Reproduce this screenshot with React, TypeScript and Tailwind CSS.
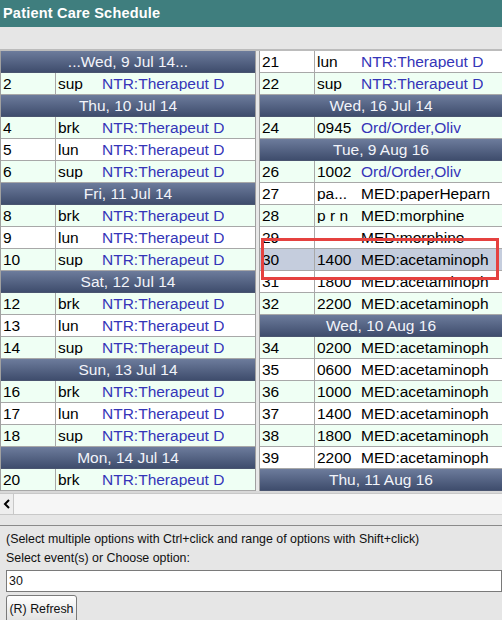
import React from 'react';

type Item =
  | { kind: 'h'; label: string }
  | { kind: 'r'; no: string; code: string; desc: string; med?: boolean; bg: 'm' | 'w' | 's' };

const left: Item[] = [
  { kind: 'h', label: '...Wed, 9 Jul 14...' },
  { kind: 'r', no: '2', code: 'sup', desc: 'NTR:Therapeut D', bg: 'm' },
  { kind: 'h', label: 'Thu, 10 Jul 14' },
  { kind: 'r', no: '4', code: 'brk', desc: 'NTR:Therapeut D', bg: 'm' },
  { kind: 'r', no: '5', code: 'lun', desc: 'NTR:Therapeut D', bg: 'w' },
  { kind: 'r', no: '6', code: 'sup', desc: 'NTR:Therapeut D', bg: 'm' },
  { kind: 'h', label: 'Fri, 11 Jul 14' },
  { kind: 'r', no: '8', code: 'brk', desc: 'NTR:Therapeut D', bg: 'm' },
  { kind: 'r', no: '9', code: 'lun', desc: 'NTR:Therapeut D', bg: 'w' },
  { kind: 'r', no: '10', code: 'sup', desc: 'NTR:Therapeut D', bg: 'm' },
  { kind: 'h', label: 'Sat, 12 Jul 14' },
  { kind: 'r', no: '12', code: 'brk', desc: 'NTR:Therapeut D', bg: 'm' },
  { kind: 'r', no: '13', code: 'lun', desc: 'NTR:Therapeut D', bg: 'w' },
  { kind: 'r', no: '14', code: 'sup', desc: 'NTR:Therapeut D', bg: 'm' },
  { kind: 'h', label: 'Sun, 13 Jul 14' },
  { kind: 'r', no: '16', code: 'brk', desc: 'NTR:Therapeut D', bg: 'm' },
  { kind: 'r', no: '17', code: 'lun', desc: 'NTR:Therapeut D', bg: 'w' },
  { kind: 'r', no: '18', code: 'sup', desc: 'NTR:Therapeut D', bg: 'm' },
  { kind: 'h', label: 'Mon, 14 Jul 14' },
  { kind: 'r', no: '20', code: 'brk', desc: 'NTR:Therapeut D', bg: 'm' },
];

const right: Item[] = [
  { kind: 'r', no: '21', code: 'lun', desc: 'NTR:Therapeut D', bg: 'w' },
  { kind: 'r', no: '22', code: 'sup', desc: 'NTR:Therapeut D', bg: 'm' },
  { kind: 'h', label: 'Wed, 16 Jul 14' },
  { kind: 'r', no: '24', code: '0945', desc: 'Ord/Order,Oliv', bg: 'm' },
  { kind: 'h', label: 'Tue, 9 Aug 16' },
  { kind: 'r', no: '26', code: '1002', desc: 'Ord/Order,Oliv', bg: 'm' },
  { kind: 'r', no: '27', code: 'pa...', desc: 'MED:paperHeparn', med: true, bg: 'w' },
  { kind: 'r', no: '28', code: 'p r n', desc: 'MED:morphine', med: true, bg: 'm' },
  { kind: 'r', no: '29', code: '', desc: 'MED:morphine', med: true, bg: 'w' },
  { kind: 'r', no: '30', code: '1400', desc: 'MED:acetaminoph', med: true, bg: 's' },
  { kind: 'r', no: '31', code: '1800', desc: 'MED:acetaminoph', med: true, bg: 'w' },
  { kind: 'r', no: '32', code: '2200', desc: 'MED:acetaminoph', med: true, bg: 'm' },
  { kind: 'h', label: 'Wed, 10 Aug 16' },
  { kind: 'r', no: '34', code: '0200', desc: 'MED:acetaminoph', med: true, bg: 'm' },
  { kind: 'r', no: '35', code: '0600', desc: 'MED:acetaminoph', med: true, bg: 'w' },
  { kind: 'r', no: '36', code: '1000', desc: 'MED:acetaminoph', med: true, bg: 'm' },
  { kind: 'r', no: '37', code: '1400', desc: 'MED:acetaminoph', med: true, bg: 'w' },
  { kind: 'r', no: '38', code: '1800', desc: 'MED:acetaminoph', med: true, bg: 'm' },
  { kind: 'r', no: '39', code: '2200', desc: 'MED:acetaminoph', med: true, bg: 'w' },
  { kind: 'h', label: 'Thu, 11 Aug 16' },
];

const bgClass = { m: 'bg-[#effff4]', w: 'bg-white', s: 'bg-[#c5cddd]' };

function Column({ items }: { items: Item[] }) {
  return (
    <div className="flex flex-col border-l border-[#a0a0a0]">
      {items.map((it, i) =>
        it.kind === 'h' ? (
          <div
            key={i}
            className="h-[22px] flex items-center justify-center bg-gradient-to-b from-[#6d7c9c] to-[#3f4d6d] text-[#f2f4fa] border-b border-[#4a5570] whitespace-nowrap"
          >
            {it.label}
          </div>
        ) : (
          <div
            key={i}
            className={`h-[22px] flex items-center border-b border-[#a8a8a8] whitespace-nowrap ${bgClass[it.bg]}`}
          >
            <div className="w-[55px] h-full flex items-center pl-[2px] border-r border-[#a8a8a8] text-black shrink-0">
              {it.no}
            </div>
            <div className="w-[46px] pl-[2px] text-black shrink-0 overflow-hidden">{it.code}</div>
            <div className={`overflow-hidden ${it.med ? 'text-black' : 'text-[#3535b8]'}`}>{it.desc}</div>
          </div>
        ),
      )}
    </div>
  );
}

export default function App() {
  return (
    <div className="w-[502px] h-[620px] overflow-hidden bg-[#e6e6e6] font-['Liberation_Sans',Arial,sans-serif]">
      <div className="h-[27px] bg-[#3f7e7e] flex items-center pl-[3px] text-white font-bold text-[14.5px] tracking-[0.2px]">
        Patient Care Schedule
      </div>
      <div className="h-[24px] border-b-[2px] border-[#bcbcbc] bg-[#e6e6e6]" />
      <div className="relative flex h-[440px] text-[15.5px] leading-none">
        <div className="w-[256px] overflow-hidden border-r border-[#a0a0a0] shrink-0">
          <Column items={left} />
        </div>
        <div className="w-[3px] bg-[#e8e8e8] shrink-0" />
        <div className="flex-1 overflow-hidden">
          <Column items={right} />
        </div>
        <div className="absolute left-[261px] top-[187px] w-[238px] h-[42px] border-[3px] border-[#e5413f] pointer-events-none" />
      </div>
      <div className="h-[2px] bg-[#d8d8d8]" />
      <div className="h-[22px] flex bg-[#f6f6f6] border-y border-[#c8c8c8]">
        <div className="w-[14px] flex items-center justify-center border-r border-[#c8c8c8] bg-[#eeeeee]">
          <svg width="8" height="10" viewBox="0 0 8 10">
            <path d="M6 1 L2 5 L6 9" stroke="#000" strokeWidth="2" fill="none" />
          </svg>
        </div>
      </div>
      <div className="h-[10px]" />
      <div className="border-t border-[#8a8a8a] pl-[6px] pt-[6px] text-[12.4px] text-[#111] leading-none">
        <div className="h-[14px] flex items-center">
          (Select multiple options with Ctrl+click and range of options with Shift+click)
        </div>
        <div className="h-[20px] mt-[2px] flex items-center">Select event(s) or Choose option:</div>
        <div className="h-[22px] mt-[2px] bg-white border border-[#7a7a7a] flex items-center pl-[2px]">30</div>
        <div className="mt-[3px] w-[71px] h-[28px] border border-[#7a7a7a] rounded-[3px] bg-gradient-to-b from-white to-[#e0e0e0] flex items-center justify-center text-[12.4px] whitespace-nowrap">
          (R) Refresh
        </div>
      </div>
    </div>
  );
}
